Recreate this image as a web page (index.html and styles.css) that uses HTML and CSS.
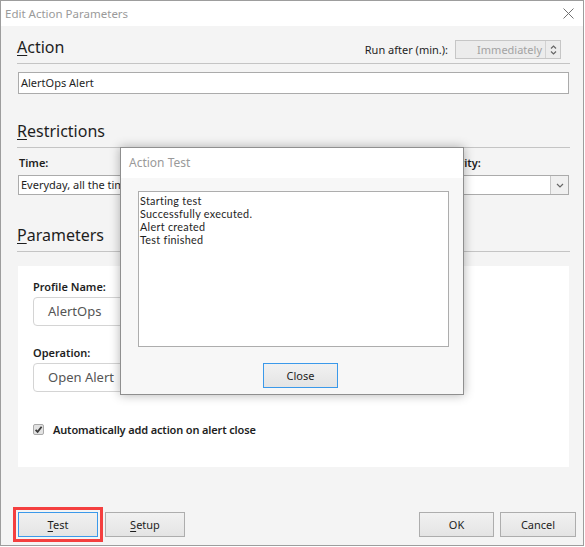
FILE: index.html
```html
<!DOCTYPE html>
<html lang="en">
<head>
<meta charset="utf-8">
<title>Edit Action Parameters</title>
<link rel="stylesheet" href="styles.css">
</head>
<body>
<div class="window">
  <div class="titlebar">
    <span class="title">Edit Action Parameters</span>
    <svg class="close-x" width="11" height="11" viewBox="0 0 11 11"><path d="M0.5 0.5L10.5 10.5M10.5 0.5L0.5 10.5"/></svg>
  </div>

  <div class="content">
    <div class="section-head">
      <h2 class="heading"><u>A</u>ction</h2>
      <div class="run-after">
        <span class="run-label">Run after (min.):</span>
        <div class="spinner">
          <span class="spin-value">Immediately</span>
          <span class="spin-btns">
            <svg width="7" height="12" viewBox="0 0 7 12"><path d="M1 4.5L3.5 2L6 4.5M1 7.5L3.5 10L6 7.5"/></svg>
          </span>
        </div>
      </div>
    </div>
    <div class="text-input name-input">AlertOps Alert</div>

    <div class="section-head gap-restrict">
      <h2 class="heading"><u>R</u>estrictions</h2>
    </div>
    <div class="restrict-row">
      <div class="field">
        <div class="field-label">Time:</div>
        <div class="select">
          <span class="select-value">Everyday, all the time</span>
          <span class="drop"><svg width="8" height="5" viewBox="0 0 8 5"><path d="M1 1L4 4L7 1"/></svg></span>
        </div>
      </div>
      <div class="field">
        <div class="field-label">Priority:</div>
        <div class="select">
          <span class="select-value">Any</span>
          <span class="drop"><svg width="8" height="5" viewBox="0 0 8 5"><path d="M1 1L4 4L7 1"/></svg></span>
        </div>
      </div>
    </div>

    <div class="section-head gap-params">
      <h2 class="heading"><u>P</u>arameters</h2>
    </div>
    <div class="panel">
      <div class="panel-label">Profile Name:</div>
      <div class="round-input">AlertOps</div>
      <div class="panel-label gap-op">Operation:</div>
      <div class="round-input">Open Alert</div>
      <label class="check-row">
        <span class="checkbox"><svg width="11" height="11" viewBox="0 0 11 11"><path d="M2.6 5.8L4.6 7.9L8.6 2.8"/></svg></span>
        <span class="check-label">Automatically add action on alert close</span>
      </label>
    </div>

    <div class="footer">
      <div class="btn-group">
        <button class="btn btn-focus btn-marked"><u>T</u>est</button>
        <button class="btn"><u>S</u>etup</button>
      </div>
      <div class="btn-group right">
        <button class="btn btn-small">OK</button>
        <button class="btn btn-small">Cancel</button>
      </div>
    </div>
  </div>

  <div class="dialog">
    <div class="dialog-title">Action Test</div>
    <div class="dialog-body">
      <div class="log">
        <div class="log-line">Starting test</div>
        <div class="log-line">Successfully executed.</div>
        <div class="log-line">Alert created</div>
        <div class="log-line">Test finished</div>
      </div>
      <div class="dialog-actions">
        <button class="btn btn-focus btn-close">Close</button>
      </div>
    </div>
  </div>
</div>
</body>
</html>
```

FILE: styles.css
```css
* {
  box-sizing: border-box;
}

body {
  margin: 0;
  background: #ffffff;
  font-family: "Segoe UI", "Noto Sans", "Open Sans", sans-serif;
  font-size: 11px;
  color: #1e1e1e;
}

u {
  text-decoration: underline;
  text-underline-offset: 2px;
}

/* window frame */
.window {
  position: relative;
  width: 584px;
  height: 546px;
  border: 1px solid #9d9d9d;
  background: #f4f4f4;
  display: flex;
  flex-direction: column;
}

.titlebar {
  height: 25px;
  flex: none;
  background: #ffffff;
  display: flex;
  align-items: center;
  justify-content: space-between;
  padding: 0 9px 0 4px;
}

.title {
  font-size: 11.5px;
  color: #9a9a9a;
}

.close-x path {
  stroke: #707070;
  stroke-width: 1;
  fill: none;
}

.content {
  flex: 1;
  display: flex;
  flex-direction: column;
  padding: 10px 13px 8px 17px;
}

/* section headings with rule below */
.section-head {
  height: 28px;
  flex: none;
  display: flex;
  justify-content: space-between;
  align-items: flex-start;
  padding-bottom: 5px;
  border-bottom: 1px solid #c4c4c4;
  margin-left: -1px;
}

.heading {
  margin: 0;
  font-size: 16px;
  font-weight: normal;
  line-height: 22px;
  color: #1e1e1e;
}

.gap-restrict {
  margin-top: 26px;
}

.gap-params {
  margin-top: 29px;
}

.run-after {
  display: flex;
  align-items: center;
  gap: 7px;
  margin-top: 4px;
  margin-right: 9px;
}

.run-label {
  color: #1e1e1e;
}

.spinner {
  width: 106px;
  height: 19px;
  display: flex;
  border: 1px solid #c6c6c6;
  background: #ececec;
}

.spin-value {
  flex: 1;
  text-align: right;
  padding-right: 3px;
  line-height: 17px;
  color: #a3a3a3;
}

.spin-btns {
  width: 15px;
  border-left: 1px solid #d2d2d2;
  display: flex;
  align-items: center;
  justify-content: center;
}

.spin-btns path,
.drop path {
  fill: none;
  stroke: #666666;
  stroke-width: 1.2;
}

/* plain text inputs */
.text-input {
  height: 22px;
  background: #ffffff;
  border: 1px solid #ababab;
  line-height: 20px;
  padding-left: 2px;
  margin-right: 1px;
}

.name-input {
  margin-top: 8px;
}

.restrict-row {
  display: grid;
  grid-template-columns: 1fr 132px;
  gap: 12px;
  margin-top: 7px;
  margin-right: 1px;
}

.field-label {
  font-weight: 600;
  line-height: 16px;
  padding-left: 1px;
}

.select {
  margin-top: 4px;
  height: 20px;
  display: flex;
  background: #ffffff;
  border: 1px solid #ababab;
}

.select-value {
  flex: 1;
  line-height: 18px;
  padding-left: 2px;
  white-space: nowrap;
  overflow: hidden;
}

.drop {
  width: 18px;
  border-left: 1px solid #c8c8c8;
  background: #f0f0f0;
  display: flex;
  align-items: center;
  justify-content: center;
}

/* parameters card */
.panel {
  margin-top: 14px;
  height: 201px;
  background: #ffffff;
  padding: 13px 15px 0 15px;
  margin-right: 1px;
}

.panel-label {
  font-weight: 600;
  line-height: 16px;
}

.gap-op {
  margin-top: 19px;
}

.round-input {
  margin-top: 2px;
  width: 300px;
  height: 29px;
  border: 1px solid #d4d4d4;
  border-radius: 4px;
  padding-left: 14px;
  line-height: 27px;
  font-size: 13px;
  color: #555555;
}

.check-row {
  margin-top: 29px;
  display: flex;
  align-items: center;
  gap: 9px;
  height: 16px;
}

.checkbox {
  width: 11px;
  height: 11px;
  border: 1px solid #a9a9a9;
  border-radius: 2px;
  background: #e2e2e2;
  display: flex;
  align-items: center;
  justify-content: center;
}

.checkbox svg {
  flex: none;
}

.checkbox path {
  fill: none;
  stroke: #3b3b3b;
  stroke-width: 1.8;
}

.check-label {
  font-weight: 600;
  letter-spacing: -0.15px;
}

/* buttons */
.footer {
  margin-top: auto;
  display: flex;
  justify-content: space-between;
  margin-right: -6px;
}

.btn-group {
  display: flex;
  gap: 7px;
}

.btn-group.right {
  gap: 6px;
}

.btn {
  width: 80px;
  height: 25px;
  margin: 0;
  padding: 0;
  font-family: inherit;
  font-size: 11px;
  color: #1e1e1e;
  border: 1px solid #adadad;
  background: linear-gradient(#f1f1f1, #e4e4e4);
}

.btn-small {
  width: 75px;
}

.btn-group.right .btn-small:last-child {
  width: 76px;
}

.btn-focus {
  border-color: #3b99ea;
}

.btn-marked {
  outline: 3px solid #f43f3f;
  outline-offset: 2px;
}

/* modal test dialog */
.dialog {
  position: absolute;
  left: 119px;
  top: 146px;
  width: 344px;
  height: 248px;
  border: 1px solid #8f8f8f;
  background: #f7f7f7;
  box-shadow: 0 0 10px rgba(0, 0, 0, 0.3);
  display: flex;
  flex-direction: column;
}

.dialog-title {
  height: 30px;
  background: #ffffff;
  padding-left: 8px;
  line-height: 30px;
  font-size: 12px;
  color: #9a9a9a;
}

.dialog-body {
  padding: 13px 14px 0 17px;
}

.log {
  height: 156px;
  background: #ffffff;
  border: 1px solid #adadad;
  padding: 2px 0 0 1px;
  font-family: "Lato", "Noto Sans", sans-serif;
  line-height: 13px;
}

.log-line {
  height: 13px;
  line-height: 13px;
  font-size: 10.8px;
  letter-spacing: 0.3px;
  white-space: nowrap;
}

.dialog-actions {
  margin-top: 16px;
  padding-left: 125px;
}

.btn-close {
  width: 75px;
}
```
